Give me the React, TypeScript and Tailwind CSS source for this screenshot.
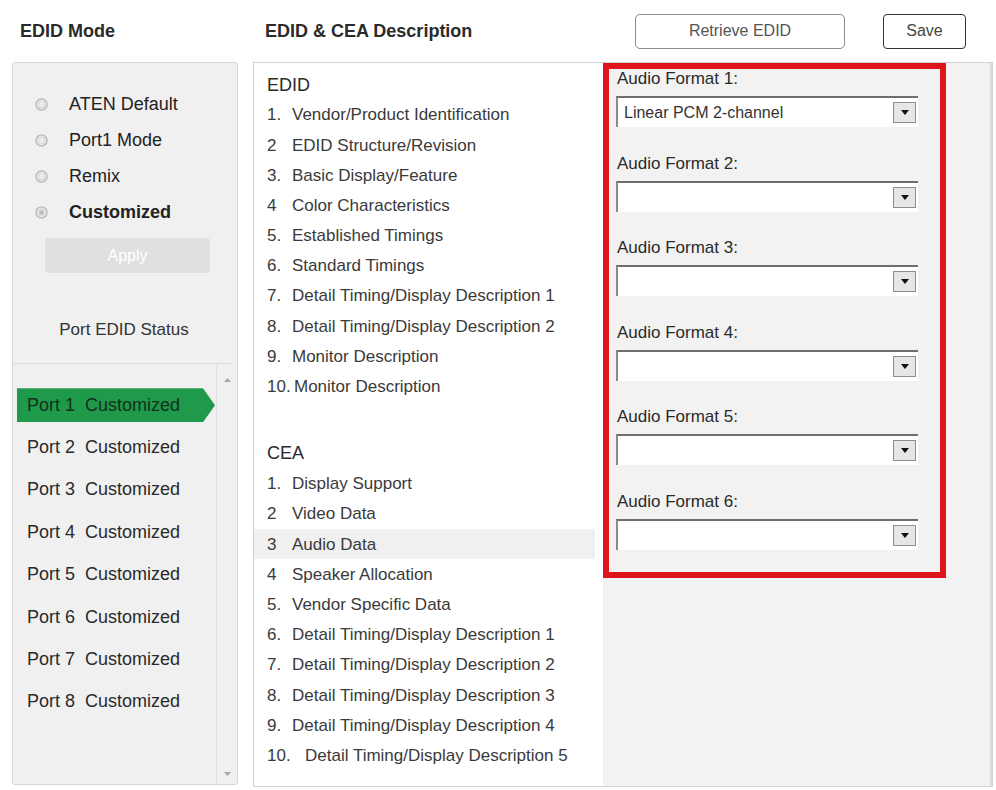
import React from "react";

const edidItems: [string, string][] = [
  ["1.", "Vendor/Product Identification"],
  ["2", "EDID Structure/Revision"],
  ["3.", "Basic Display/Feature"],
  ["4", "Color Characteristics"],
  ["5.", "Established Timings"],
  ["6.", "Standard Timings"],
  ["7.", "Detail Timing/Display Description 1"],
  ["8.", "Detail Timing/Display Description 2"],
  ["9.", "Monitor Description"],
  ["10.", "Monitor Description"],
];

const ceaItems: [string, string][] = [
  ["1.", "Display Support"],
  ["2", "Video Data"],
  ["3", "Audio Data"],
  ["4", "Speaker Allocation"],
  ["5.", "Vendor Specific Data"],
  ["6.", "Detail Timing/Display Description 1"],
  ["7.", "Detail Timing/Display Description 2"],
  ["8.", "Detail Timing/Display Description 3"],
  ["9.", "Detail Timing/Display Description 4"],
  ["10.", "Detail Timing/Display Description 5"],
];

const modes = [
  { label: "ATEN Default", selected: false },
  { label: "Port1 Mode", selected: false },
  { label: "Remix", selected: false },
  { label: "Customized", selected: true },
];

function Radio({ selected }: { selected: boolean }) {
  return (
    <svg width="13" height="13" viewBox="0 0 13 13" className="shrink-0">
      <circle cx="6.5" cy="6.5" r="5.6" fill="#ececec" stroke="#b4b4b4" strokeWidth="1.2" />
      <circle cx="6.5" cy="6.5" r="3.6" fill="none" stroke="#d2d2d2" strokeWidth="1" />
      {selected && <circle cx="6.5" cy="6.5" r="2.3" fill="#b8b8b8" />}
    </svg>
  );
}

function ListRow({
  num,
  text,
  active,
  numWidth,
}: {
  num: string;
  text: string;
  active?: boolean;
  numWidth: string;
}) {
  return (
    <div
      className={`flex h-[30.2px] items-center pl-[13px] mr-[8px] text-[17px] text-[#3a3a3a] ${
        active ? "bg-[#f0f0f0]" : ""
      }`}
    >
      <span className={`${numWidth} shrink-0`}>{num}</span>
      <span className="whitespace-nowrap">{text}</span>
    </div>
  );
}

function FormatSelect({ value }: { value?: string }) {
  return (
    <div className="flex h-[31px] w-[302px] items-center border-l-2 border-t-2 border-l-[#8a8a8a] border-t-[#6e6e6e] bg-white pr-[2px]">
      <span className="flex-1 pl-[6px] text-[16px] text-[#333] whitespace-nowrap">{value ?? ""}</span>
      <div className="flex h-[21px] w-[23px] items-center justify-center border border-[#8e8e8e] bg-[#e6e6e6]">
        <svg width="8" height="5" viewBox="0 0 8 5">
          <path d="M0 0 L8 0 L4 5 Z" fill="#111" />
        </svg>
      </div>
    </div>
  );
}

export default function App() {
  return (
    <div
      className="flex h-[790px] w-[996px] flex-col bg-white text-[#333]"
      style={{ fontFamily: '"Liberation Sans", Arial, sans-serif' }}
    >
      {/* header row */}
      <div className="flex h-[62px] shrink-0 items-center">
        <div className="w-[253px] shrink-0 pl-[20px] text-[18px] font-bold text-[#2a2a2a]">EDID Mode</div>
        <div className="w-[382px] shrink-0 pl-[12px] text-[18px] font-bold text-[#2a2a2a]">
          EDID &amp; CEA Description
        </div>
        <div className="flex h-[35px] w-[210px] items-center justify-center rounded-[5px] border border-[#8c8c8c] text-[16px] text-[#555]">
          Retrieve EDID
        </div>
        <div className="ml-[38px] flex h-[35px] w-[83px] items-center justify-center rounded-[4px] border border-[#333] text-[16px] text-[#444]">
          Save
        </div>
      </div>

      {/* body */}
      <div className="flex h-[725px] shrink-0">
        {/* EDID mode panel */}
        <div className="ml-[12px] flex h-[723px] w-[226px] shrink-0 flex-col rounded-[3px] border border-[#d6d6d6] bg-[#f0f0f0]">
          <div className="pt-[23px]">
            {modes.map((m) => (
              <div key={m.label} className="flex h-[36px] items-center gap-[21px] pl-[22px]">
                <Radio selected={m.selected} />
                <span className={`text-[18px] text-[#222] ${m.selected ? "font-bold" : ""}`}>{m.label}</span>
              </div>
            ))}
          </div>
          <div className="ml-[32px] mt-[8px] flex h-[35px] w-[165px] items-center justify-center rounded-[3px] bg-[#e0e0e0] text-[16px] text-white">
            Apply
          </div>
          <div className="mt-[45px] flex h-[24px] items-center justify-center pr-[2px] text-[17px] text-[#333]">
            Port EDID Status
          </div>
          <div className="mr-[6px] mt-[21px] border-t border-[#dcdcdc]" />
          <div className="flex flex-1">
            <div className="flex-1 pl-[4px] pt-[20px]">
              {Array.from({ length: 8 }, (_, i) => i + 1).map((n) =>
                n === 1 ? (
                  <div key={n} className="flex h-[42.4px] items-center">
                    <div className="flex h-[34px] w-[198px] items-center bg-[#1f9a4a] pl-[10px] text-[18px] text-[#13301a] [clip-path:polygon(0_0,186px_0,198px_50%,186px_100%,0_100%)]">
                      <span className="whitespace-pre">Port 1  Customized</span>
                    </div>
                  </div>
                ) : (
                  <div key={n} className="flex h-[42.4px] items-center pl-[10px] text-[18px] text-[#2a2a2a]">
                    <span className="whitespace-pre">{`Port ${n}  Customized`}</span>
                  </div>
                )
              )}
            </div>
            <div className="flex w-[21px] shrink-0 flex-col items-center justify-between border-l border-[#e2e2e2] pb-[8px] pt-[14px]">
              <svg width="7" height="4" viewBox="0 0 7 4">
                <path d="M0 4 L7 4 L3.5 0 Z" fill="#a8a8a8" />
              </svg>
              <svg width="7" height="4" viewBox="0 0 7 4">
                <path d="M0 0 L7 0 L3.5 4 Z" fill="#a8a8a8" />
              </svg>
            </div>
          </div>
        </div>

        {/* description + audio format panels */}
        <div className="ml-[15px] flex h-[725px] w-[740px] shrink-0 border border-[#d2d2d2]">
          <div className="w-[349px] shrink-0 bg-white pt-[7px]">
            <div className="flex h-[30px] items-center pl-[13px] text-[18px] text-[#2a2a2a]">EDID</div>
            {edidItems.map(([n, t], i) => (
              <ListRow key={`e${i}`} num={n} text={t} numWidth={i === 9 ? "w-[27px]" : "w-[25px]"} />
            ))}
            <div className="mt-[37px] flex h-[30px] items-center pl-[13px] text-[18px] text-[#2a2a2a]">CEA</div>
            {ceaItems.map(([n, t], i) => (
              <ListRow
                key={`c${i}`}
                num={n}
                text={t}
                active={i === 2}
                numWidth={i === 9 ? "w-[38px]" : "w-[25px]"}
              />
            ))}
          </div>

          <div className="flex-1 border-r-2 border-r-[#dcdcdc] bg-[#f2f2f2]">
            <div className="h-[515px] w-[343px] border-[6px] border-[#e0141b] pb-[20px] pl-[7px]">
              {[1, 2, 3, 4, 5, 6].map((n) => (
                <div key={n} className="mb-[26.5px]">
                  <div className="flex h-[20px] items-center pl-[1px] text-[17px] text-[#2a2a2a]">
                    {`Audio Format ${n}:`}
                  </div>
                  <div className="mt-[7px]">
                    <FormatSelect value={n === 1 ? "Linear PCM 2-channel" : undefined} />
                  </div>
                </div>
              ))}
            </div>
          </div>
        </div>
      </div>
    </div>
  );
}
